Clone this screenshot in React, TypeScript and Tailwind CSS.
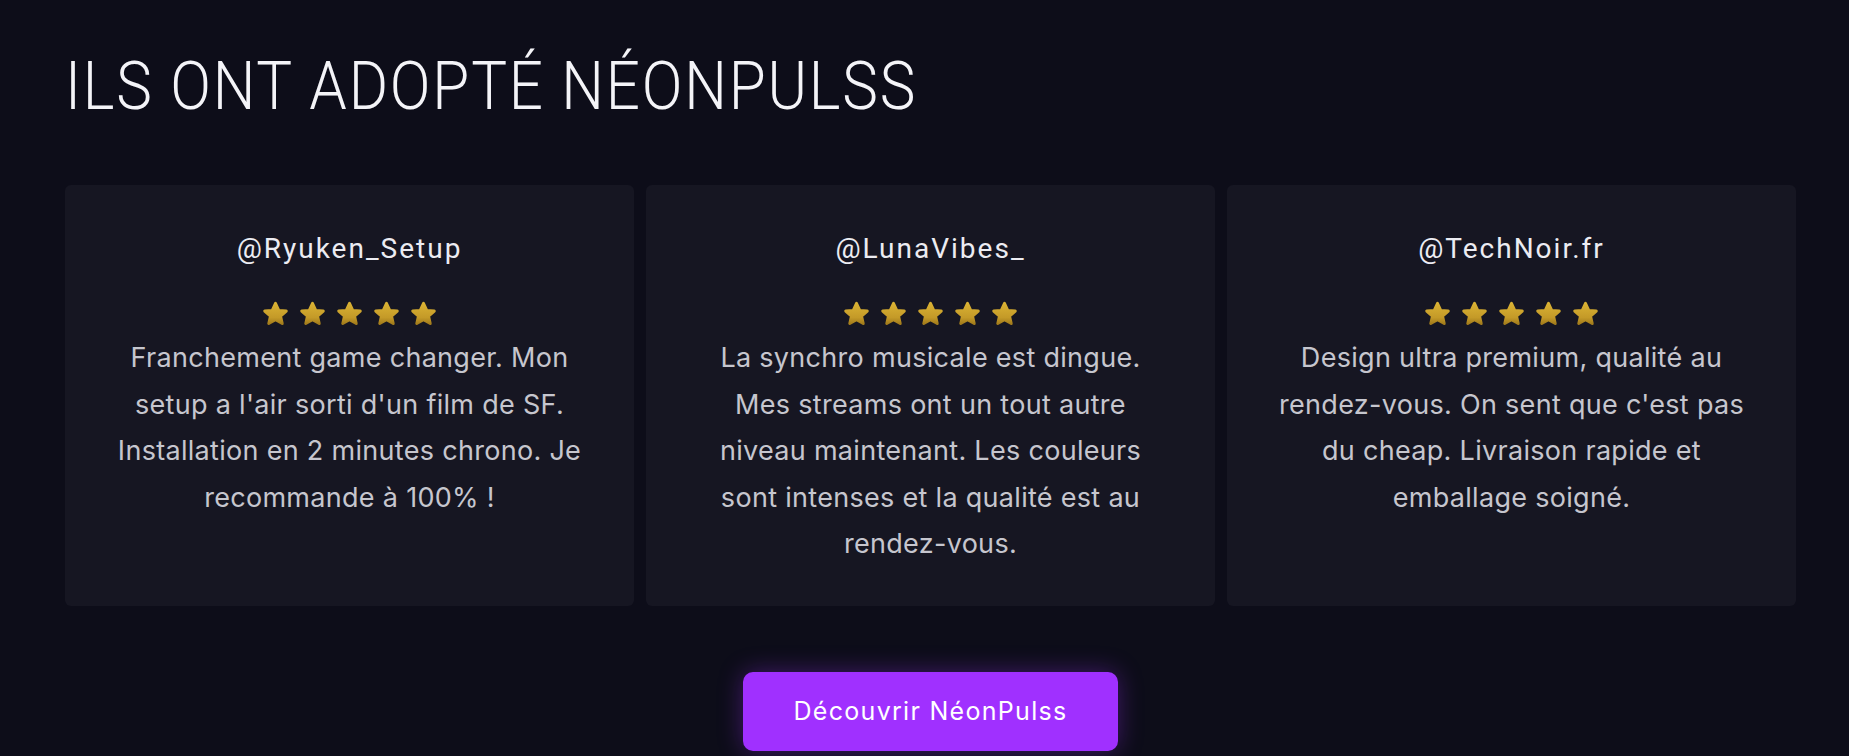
import React from "react";

type Review = {
  handle: string;
  text: string;
};

const REVIEWS: Review[] = [
  {
    handle: "@Ryuken_Setup",
    text: "Franchement game changer. Mon setup a l'air sorti d'un film de SF. Installation en 2 minutes chrono. Je recommande à 100% !",
  },
  {
    handle: "@LunaVibes_",
    text: "La synchro musicale est dingue. Mes streams ont un tout autre niveau maintenant. Les couleurs sont intenses et la qualité est au rendez-vous.",
  },
  {
    handle: "@TechNoir.fr",
    text: "Design ultra premium, qualité au rendez-vous. On sent que c'est pas du cheap. Livraison rapide et emballage soigné.",
  },
];

const Star = ({ id }: { id: string }) => (
  <svg width="27" height="26" viewBox="0 0 24 23" aria-hidden="true">
    <defs>
      <linearGradient id={id} x1="0" y1="0" x2="0" y2="1">
        <stop offset="0%" stopColor="#d9b133" />
        <stop offset="70%" stopColor="#c49a28" />
        <stop offset="100%" stopColor="#a47d1c" />
      </linearGradient>
    </defs>
    <polygon
      points="12,2 14.9,8.3 21.6,8.9 16.5,13.4 18,20 12,16.6 6,20 7.5,13.4 2.4,8.9 9.1,8.3"
      fill={`url(#${id})`}
      stroke={`url(#${id})`}
      strokeWidth="2.6"
      strokeLinejoin="round"
    />
  </svg>
);

const ReviewCard = ({ review, index }: { review: Review; index: number }) => (
  <div className="flex flex-col items-center rounded-md bg-[#161622] px-[48px] pt-[48px] pb-[38px] text-center">
    <h3 className="h-[32px] text-[28px] leading-[32px] tracking-[2px] text-[#ececf2] [font-family:Roboto,sans-serif]">
      {review.handle}
    </h3>
    <div className="mt-[36px] flex h-[26px] items-center gap-[10px]">
      {[0, 1, 2, 3, 4].map((s) => (
        <Star key={s} id={`star-${index}-${s}`} />
      ))}
    </div>
    <p className="mt-[8px] text-[27px] leading-[46.6px] tracking-[0.3px] text-[#c6c6ce] [font-family:Inter,'Noto_Sans',sans-serif]">
      {review.text}
    </p>
  </div>
);

export default function App() {
  return (
    <div className="min-h-screen bg-[#0d0d19] pl-[65px] pr-[53px] pt-[54px]">
      <h2 className="origin-left scale-x-[0.91] text-[66px] leading-[66px] font-light tracking-[2px] text-[#f4f4f8] [font-family:Roboto,sans-serif]">
        ILS ONT ADOPTÉ NÉONPULSS
      </h2>
      <div className="mt-[65px] grid grid-cols-3 gap-[12px]">
        {REVIEWS.map((r, i) => (
          <ReviewCard key={r.handle} review={r} index={i} />
        ))}
      </div>
      <div className="mt-[66px] flex justify-center">
        <button className="h-[79px] w-[375px] rounded-[10px] bg-[#a030ff] text-[25px] tracking-[1.3px] text-white shadow-[0_0_24px_rgba(160,48,255,0.35)] [font-family:Inter,'Noto_Sans',sans-serif]">
          Découvrir NéonPulss
        </button>
      </div>
    </div>
  );
}
